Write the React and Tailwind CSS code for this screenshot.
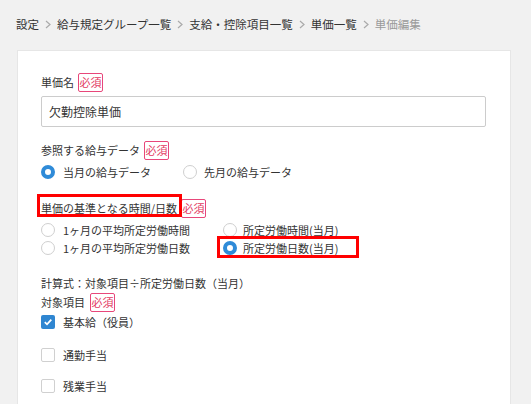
import React from "react";

const font = { fontFamily: '"Noto Sans CJK JP", "Noto Sans", sans-serif' };

function Chevron() {
  return (
    <svg width="6" height="9" viewBox="0 0 6 9" className="mx-[6px]">
      <path d="M1 1 L5 4.5 L1 8" fill="none" stroke="#aaaaaa" strokeWidth="1.2" />
    </svg>
  );
}

function Badge({ ml = "ml-[4px]" }) {
  return (
    <span className={"inline-flex items-center justify-center w-[25px] h-[19px] border border-[#e8477a] rounded-[2px] text-[11px] leading-none text-[#e23a62] " + ml}>
      必須
    </span>
  );
}

function Radio({ checked }) {
  return checked ? (
    <span className="inline-block shrink-0 w-[14px] h-[14px] rounded-full border-[4px] border-[#2f8bd8] bg-white" />
  ) : (
    <span className="inline-block shrink-0 w-[14px] h-[14px] rounded-full border border-[#cfcfcf] bg-white" />
  );
}

function Checkbox({ checked }) {
  return checked ? (
    <span className="inline-flex shrink-0 items-center justify-center w-[14px] h-[14px] rounded-[2px] bg-[#2f86d1]">
      <svg width="10" height="10" viewBox="0 0 10 10">
        <path d="M1.8 5.2 L4 7.3 L8.3 2.6" fill="none" stroke="white" strokeWidth="1.8" />
      </svg>
    </span>
  ) : (
    <span className="inline-block shrink-0 w-[14px] h-[14px] rounded-[2px] border border-[#d0d0d0] bg-white" />
  );
}

export default function App() {
  return (
    <div className="w-[531px] h-[404px] overflow-hidden bg-[#f1f1f1] text-[#333333]" style={font}>
      <div className="flex items-center h-[48px] pl-[16px] text-[11.5px] leading-none pt-[1px]">
        <span>設定</span>
        <Chevron />
        <span>給与規定グループ一覧</span>
        <Chevron />
        <span>支給・控除項目一覧</span>
        <Chevron />
        <span>単価一覧</span>
        <Chevron />
        <span className="text-[#9a9a9a]">単価編集</span>
      </div>
      <div className="ml-[17px] mt-[2px] w-[494px] h-[400px] bg-white border border-[#e6e6e6] pl-[23px] pr-[24px] pt-[22px] text-[11px]">
        <div className="flex items-center h-[19px]">
          <span>単価名</span>
          <Badge />
        </div>
        <div className="mt-[4px] h-[31px] border border-[#cccccc] rounded-[2px] flex items-center pl-[7px] text-[12px]">
          欠勤控除単価
        </div>
        <div className="flex items-center h-[19px] mt-[14px]">
          <span>参照する給与データ</span>
          <Badge />
        </div>
        <div className="flex items-center h-[16px] mt-[4px]">
          <div className="flex items-center w-[142px]">
            <Radio checked />
            <span className="ml-[8px]">当月の給与データ</span>
          </div>
          <div className="flex items-center">
            <Radio />
            <span className="ml-[7px]">先月の給与データ</span>
          </div>
        </div>
        <div className="flex items-center h-[20px] mt-[18px]">
          <span className="relative">
            単価の基準となる時間/日数
            <span className="absolute left-[-4px] top-[-6px] w-[145px] h-[23px] border-[3px] border-[#ff0000]" />
          </span>
          <Badge ml="ml-[4px]" />
        </div>
        <div className="grid grid-cols-[182px_1fr] mt-[3px]">
          <div className="flex items-center h-[18px]">
            <Radio />
            <span className="ml-[8px]">1ヶ月の平均所定労働時間</span>
          </div>
          <div className="flex items-center h-[18px]">
            <Radio />
            <span className="ml-[6px]">所定労働時間(当月)</span>
          </div>
          <div className="flex items-center h-[18px]">
            <Radio />
            <span className="ml-[8px]">1ヶ月の平均所定労働日数</span>
          </div>
          <div className="relative flex items-center h-[18px]">
            <Radio checked />
            <span className="ml-[6px]">所定労働日数(当月)</span>
            <span className="absolute left-[-6px] top-[-3px] w-[142px] h-[22px] border-[3px] border-[#ff0000]" />
          </div>
        </div>
        <div className="flex items-center h-[18px] mt-[17px]">
          計算式：対象項目÷所定労働日数（当月）
        </div>
        <div className="flex items-center h-[19px] mt-[1px]">
          <span>対象項目</span>
          <Badge ml="ml-[5px]" />
        </div>
        <div className="flex items-center h-[16px] mt-[2px]">
          <Checkbox checked />
          <span className="ml-[8px]">基本給（役員）</span>
        </div>
        <div className="flex items-center h-[16px] mt-[17px]">
          <Checkbox />
          <span className="ml-[8px]">通勤手当</span>
        </div>
        <div className="flex items-center h-[16px] mt-[15px]">
          <Checkbox />
          <span className="ml-[8px]">残業手当</span>
        </div>
      </div>
    </div>
  );
}
